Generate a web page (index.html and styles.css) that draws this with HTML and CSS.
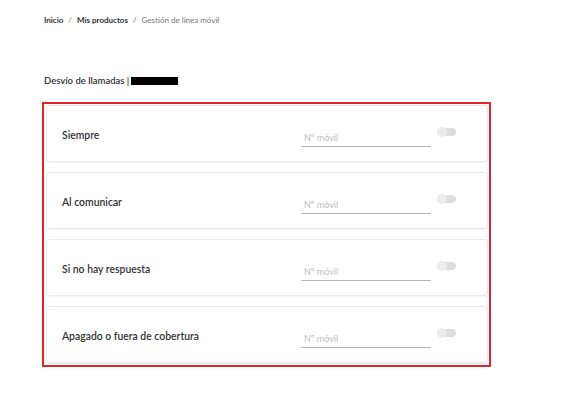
FILE: index.html
```html
<!DOCTYPE html>
<html lang="es">
<head>
<meta charset="utf-8">
<title>Desvío de llamadas</title>
<link rel="stylesheet" href="styles.css">
</head>
<body>
<div class="page">
  <nav class="breadcrumb">
    <a class="crumb">Inicio</a><span class="sep">/</span><a class="crumb">Mis productos</a><span class="sep">/</span><span class="current">Gestión de línea móvil</span>
  </nav>
  <h1 class="title">Desvío de llamadas |<span class="redacted"></span></h1>
  <div class="highlight">
    <div class="card">
      <span class="label">Siempre</span>
      <span class="field">Nº móvil</span>
      <span class="toggle"><span class="knob"></span></span>
    </div>
    <div class="card">
      <span class="label">Al comunicar</span>
      <span class="field">Nº móvil</span>
      <span class="toggle"><span class="knob"></span></span>
    </div>
    <div class="card">
      <span class="label">Si no hay respuesta</span>
      <span class="field">Nº móvil</span>
      <span class="toggle"><span class="knob"></span></span>
    </div>
    <div class="card">
      <span class="label">Apagado o fuera de cobertura</span>
      <span class="field">Nº móvil</span>
      <span class="toggle"><span class="knob"></span></span>
    </div>
  </div>
</div>
</body>
</html>
```
FILE: styles.css
```css
html, body {
  margin: 0;
  padding: 0;
  background: #ffffff;
}
body {
  font-family: Lato, "Open Sans", Arial, sans-serif;
  color: #333333;
}
.page {
  padding: 15px 0 0 44px;
  width: 448px;
}
.breadcrumb {
  font-size: 8px;
  line-height: 11px;
  color: #333;
  display: flex;
  align-items: center;
}
.crumb {
  font-weight: 700;
  color: #333;
}
.sep {
  margin: 0 5px;
  color: #666;
}
.current {
  color: #777;
}
.title {
  margin: 49px 0 0 0;
  font-size: 9.5px;
  line-height: 12px;
  font-weight: 600;
  color: #333;
  display: flex;
  align-items: center;
}
.redacted {
  display: inline-block;
  width: 47px;
  height: 8px;
  background: #000;
  margin-left: 2px;
}
.highlight {
  margin: 15px 0 0 -2px;
  border: 2px solid #e3232c;
  padding: 1px 1px 2px 2px;
  width: 442px;
  display: flex;
  flex-direction: column;
  gap: 10px;
}
.card {
  height: 55px;
  border: 1px solid #e8e8e8;
  border-radius: 3px;
  box-shadow: 0 1px 1px rgba(0,0,0,0.04);
  display: flex;
  align-items: center;
  padding-left: 15px;
  position: relative;
}
.label {
  font-size: 10.4px;
  font-weight: 600;
  color: #333;
  width: 239px;
  margin-top: 2px;
}
.field {
  width: 127px;
  border-bottom: 1px solid #b5b5b5;
  font-size: 9px;
  color: #bdbdbd;
  padding: 0 0 3px 3px;
  margin-top: 12px;
}
.toggle {
  margin-left: 6px;
  margin-top: -4px;
  width: 19px;
  height: 8px;
  border-radius: 4px;
  background: #dedede;
  position: relative;
}
.knob {
  position: absolute;
  left: 0;
  top: -1px;
  width: 10px;
  height: 10px;
  border-radius: 50%;
  background: #ececec;
}
```
